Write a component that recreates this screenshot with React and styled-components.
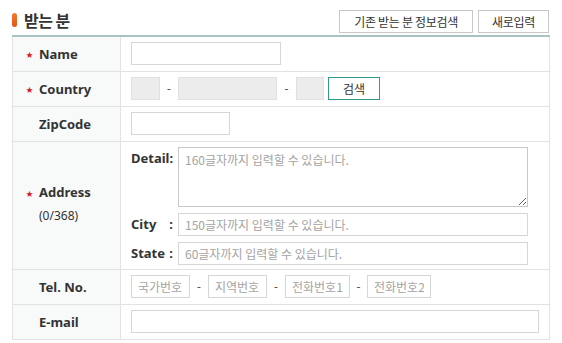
import React from "react";
import styled, { createGlobalStyle } from "styled-components";

const GlobalStyle = createGlobalStyle`
  body {
    margin: 0;
    background: #fff;
    font-family: "Noto Sans", "Noto Sans CJK KR", sans-serif;
    color: #333;
  }
`;

const Wrap = styled.div`
  padding: 10px 0 0 12px;
  width: 538px;
`;

const Header = styled.div`
  display: flex;
  align-items: flex-start;
  justify-content: space-between;
  height: 25px;
`;

const Title = styled.h2`
  display: flex;
  align-items: center;
  gap: 7px;
  margin: 0;
  height: 20px;
  font-size: 16px;
  font-weight: 700;
  color: #333;
  letter-spacing: -0.5px;
  font-family: "Noto Sans CJK KR", sans-serif;
  &::before {
    content: "";
    width: 5px;
    height: 14px;
    border-radius: 3px;
    background: linear-gradient(#f27a2a, #e2541a);
  }
`;

const ButtonGroup = styled.div`
  display: flex;
  gap: 5px;
  margin-right: 1px;
`;

const TopButton = styled.button`
  height: 23px;
  padding: 0 ${(p) => p.$pad || 14}px;
  border: 1px solid #c8c8c8;
  background: #fff;
  color: #333;
  font-family: "Noto Sans CJK KR", sans-serif;
  font-size: 12px;
  letter-spacing: -0.3px;
  cursor: pointer;
`;

const Table = styled.table`
  width: 538px;
  border-collapse: collapse;
  border-top: 2px solid #a9c3c1;
  border-left: 1px solid #e2e2e2;
  border-right: 1px solid #e2e2e2;
  table-layout: fixed;
`;

const Row = styled.tr`
  height: ${(p) => p.$h || 35}px;
  border-bottom: 1px solid #e2e2e2;
`;

const Label = styled.th`
  box-sizing: border-box;
  width: 108px;
  background: #f8f9f9;
  border-right: 1px solid #e2e2e2;
  text-align: left;
  padding: 0 0 0 26px;
  font-size: 13px;
  font-weight: 700;
  color: #333;
  vertical-align: middle;
  position: relative;
`;

const Star = styled.span`
  position: absolute;
  left: 13px;
  top: ${(p) => p.$top || "50%"};
  transform: translateY(-50%);
  color: #d8141c;
  font-size: 7px;
`;

const LabelMain = styled.div`
  margin-top: -4px;
`;

const Sub = styled.div`
  font-weight: 400;
  font-size: 12px;
  margin-top: 6px;
`;

const Cell = styled.td`
  padding: 0 10px;
  vertical-align: middle;
`;

const Line = styled.div`
  display: flex;
  align-items: center;
`;

const Input = styled.input`
  box-sizing: border-box;
  width: ${(p) => p.$w}px;
  height: 23px;
  border: 1px solid ${(p) => (p.$filled ? "#e0e0e0" : "#d6d6d6")};
  background: ${(p) => (p.$filled ? "#ececec" : "#fff")};
  padding: 0 6px;
  font-family: "Noto Sans CJK KR", sans-serif;
  font-size: 12px;
  color: #333;
  outline: none;
  &::placeholder {
    color: #a4a4a4;
  }
`;

const Dash = styled.span`
  display: inline-block;
  width: ${(p) => p.$w || 18}px;
  text-align: center;
  font-size: 12px;
  color: #555;
`;

const SearchButton = styled.button`
  box-sizing: border-box;
  width: 52px;
  height: 23px;
  margin-left: 4px;
  border: 1px solid #2f9a8c;
  background: #fff;
  color: #333;
  font-family: "Noto Sans CJK KR", sans-serif;
  font-size: 12px;
  cursor: pointer;
`;

const AddressGrid = styled.div`
  display: grid;
  grid-template-columns: 47px 350px;
  row-gap: 6px;
  padding: 5px 0 4px;
`;

const FieldName = styled.div`
  display: flex;
  justify-content: space-between;
  padding-right: 5px;
  font-size: 13px;
  font-weight: 700;
  color: #333;
  align-self: ${(p) => (p.$top ? "start" : "center")};
  margin-top: ${(p) => (p.$top ? 2 : 0)}px;
`;

const TextArea = styled.textarea`
  box-sizing: border-box;
  width: 350px;
  height: 60px;
  border: 1px solid #c8c8c8;
  padding: 3px 6px;
  font-family: "Noto Sans CJK KR", sans-serif;
  font-size: 12px;
  resize: vertical;
  outline: none;
  &::placeholder {
    color: #a4a4a4;
  }
`;

export default function App() {
  return (
    <>
      <GlobalStyle />
      <Wrap>
        <Header>
          <Title>받는 분</Title>
          <ButtonGroup>
            <TopButton $pad={14}>기존 받는 분 정보검색</TopButton>
            <TopButton $pad={13}>새로입력</TopButton>
          </ButtonGroup>
        </Header>
        <Table>
          <tbody>
            <Row>
              <Label>
                <Star>★</Star>Name
              </Label>
              <Cell>
                <Input $w={150} />
              </Cell>
            </Row>
            <Row>
              <Label>
                <Star>★</Star>Country
              </Label>
              <Cell>
                <Line>
                  <Input $w={29} $filled />
                  <Dash $w={18}>-</Dash>
                  <Input $w={99} $filled />
                  <Dash $w={19}>-</Dash>
                  <Input $w={28} $filled />
                  <SearchButton>검색</SearchButton>
                </Line>
              </Cell>
            </Row>
            <Row>
              <Label>ZipCode</Label>
              <Cell>
                <Input $w={99} />
              </Cell>
            </Row>
            <Row $h={127}>
              <Label>
                <Star $top="51px">★</Star>
                <LabelMain>Address</LabelMain>
                <Sub>(0/368)</Sub>
              </Label>
              <Cell>
                <AddressGrid>
                  <FieldName $top>
                    <span>Detail</span>
                    <span>:</span>
                  </FieldName>
                  <TextArea placeholder="160글자까지 입력할 수 있습니다." />
                  <FieldName>
                    <span>City</span>
                    <span>:</span>
                  </FieldName>
                  <Input $w={350} placeholder="150글자까지 입력할 수 있습니다." />
                  <FieldName>
                    <span>State</span>
                    <span>:</span>
                  </FieldName>
                  <Input $w={350} placeholder="60글자까지 입력할 수 있습니다." />
                </AddressGrid>
              </Cell>
            </Row>
            <Row>
              <Label>Tel. No.</Label>
              <Cell>
                <Line>
                  <Input $w={59} placeholder="국가번호" />
                  <Dash>-</Dash>
                  <Input $w={59} placeholder="지역번호" />
                  <Dash>-</Dash>
                  <Input $w={65} placeholder="전화번호1" />
                  <Dash $w={17}>-</Dash>
                  <Input $w={64} placeholder="전화번호2" />
                </Line>
              </Cell>
            </Row>
            <Row>
              <Label>E-mail</Label>
              <Cell>
                <Input $w={408} />
              </Cell>
            </Row>
          </tbody>
        </Table>
      </Wrap>
    </>
  );
}
